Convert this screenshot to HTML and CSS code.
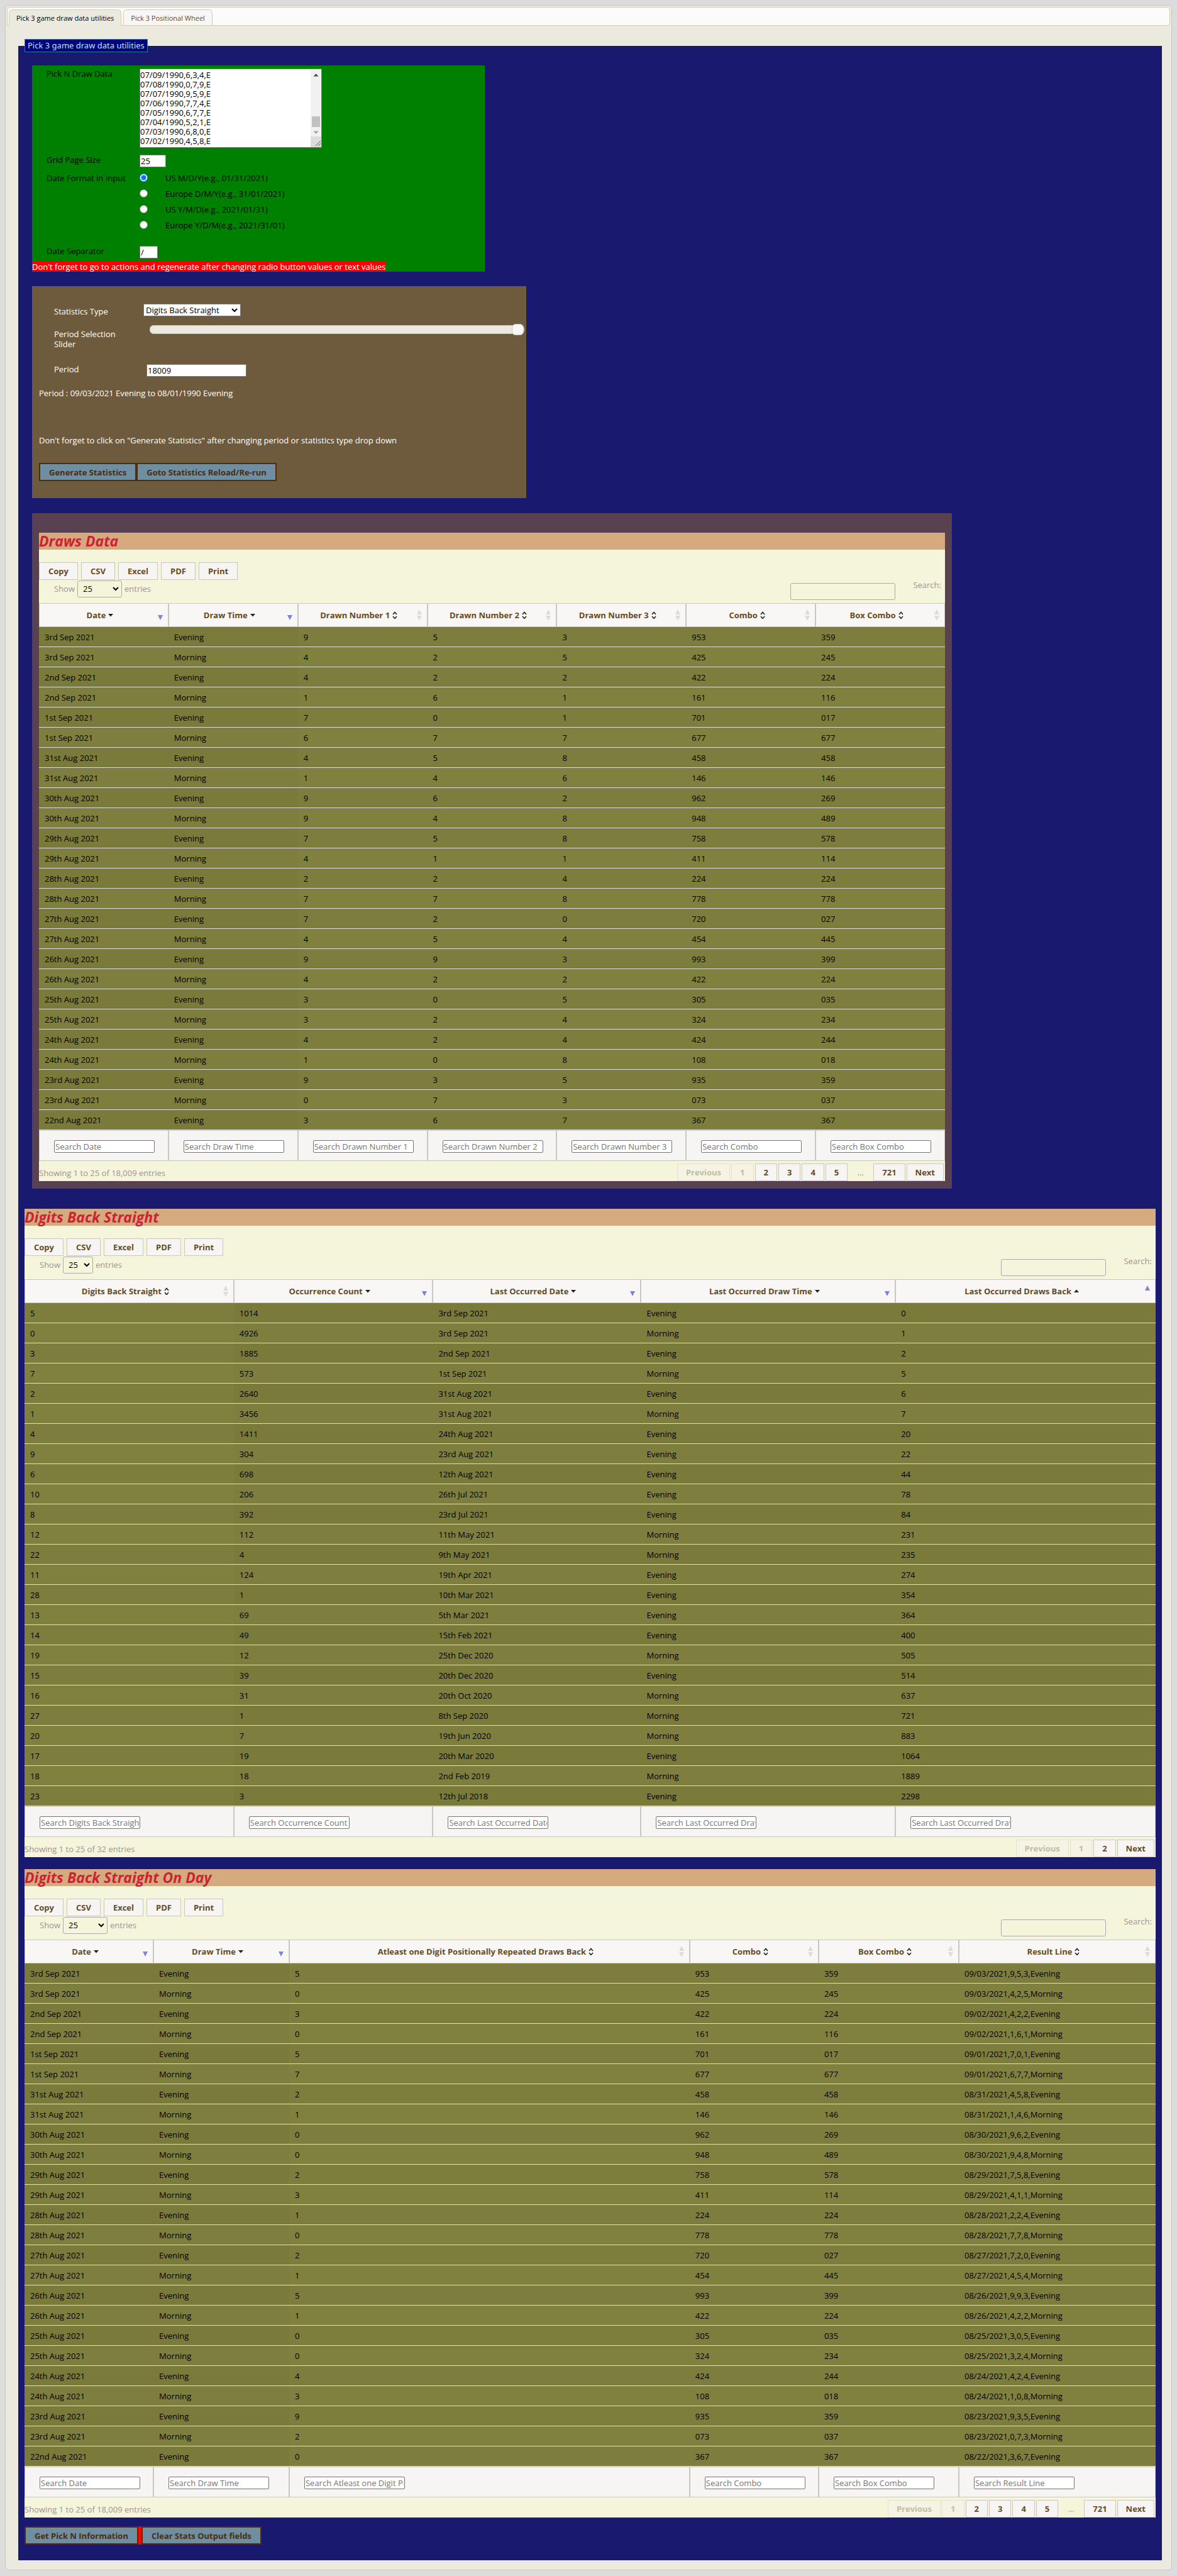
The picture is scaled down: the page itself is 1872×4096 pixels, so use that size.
FILE: index.html
```
<!DOCTYPE html>
<html lang="en">
<head>
<meta charset="utf-8">
<title>Pick 3 game draw data utilities</title>
<link rel="stylesheet" href="styles.css">
</head>
<body>
<svg class="symbols" aria-hidden="true">
  <symbol id="caret-down" viewBox="0 0 8 12"><path d="M0 4h8L4 8.500z"/></symbol>
  <symbol id="caret-up" viewBox="0 0 8 12"><path d="M0 8h8L4 3.500z"/></symbol>
  <symbol id="caret-both" viewBox="0 0 8 12"><path d="M1 5l3-3.500L7 5M1 8l3 3.500L7 8" fill="none" stroke="#222" stroke-width="1.600"/></symbol>
  <symbol id="sort-both" viewBox="0 0 8 20"><path d="M0 9L4 1l4 8zM0 11h8l-4 8z" fill="#dcdcdc"/></symbol>
  <symbol id="sort-down" viewBox="0 0 8 20"><path d="M0 10h8l-4 8z" fill="#7b83df"/></symbol>
  <symbol id="sort-up" viewBox="0 0 8 20"><path d="M0 9L4 1l4 8z" fill="#7b83df"/></symbol>
</svg>
<div class="tabs">
  <nav class="tab-bar">
    <a class="tab tab-active" href="#utilities">Pick 3 game draw data utilities</a>
    <a class="tab" href="#wheel">Pick 3 Positional Wheel</a>
  </nav>
  <main class="panel" id="utilities">
    <fieldset class="utilities">
      <legend>Pick 3 game draw data utilities</legend>

      <section class="input-box">
        <div class="row row-data">
          <label class="name" for="draws">Pick N Draw Data</label>
          <div class="data-wrap">
            <textarea id="draws" class="data">07/09/1990,6,3,4,E
07/08/1990,0,7,9,E
07/07/1990,9,5,9,E
07/06/1990,7,7,4,E
07/05/1990,6,7,7,E
07/04/1990,5,2,1,E
07/03/1990,6,8,0,E
07/02/1990,4,5,8,E</textarea>
            <svg class="scrollbar" viewBox="0 0 17 124" aria-hidden="true">
              <path d="M0 0h17v124H0z" fill="#f1f1f1"/>
              <path d="M4.500 11.500h8L8.500 7z" fill="#505050"/>
              <path d="M2 75h13v17H2z" fill="#c1c1c1"/>
              <path d="M4.500 98.500h8L8.500 103z" fill="#a3a3a3"/>
              <path d="M0 107h17v17H0z" fill="#dcdcdc"/>
              <path d="M8 122l8-8M12 122l4-4" stroke="#555" fill="none"/>
            </svg>
          </div>
        </div>
        <div class="row row-size">
          <label class="name" for="size">Grid Page Size</label>
          <input class="text text-size" id="size" type="text" value="25">
        </div>
        <div class="row row-format">
          <span class="name">Date Format in Input</span>
          <div class="options">
            <label class="option"><input type="radio" name="format" checked><span>US M/D/Y(e.g., 01/31/2021)</span></label>
            <label class="option"><input type="radio" name="format"><span>Europe D/M/Y(e.g., 31/01/2021)</span></label>
            <label class="option"><input type="radio" name="format"><span>US Y/M/D(e.g., 2021/01/31)</span></label>
            <label class="option"><input type="radio" name="format"><span>Europe Y/D/M(e.g., 2021/31/01)</span></label>
          </div>
        </div>
        <div class="row row-separator">
          <label class="name" for="separator">Date Separator</label>
          <input class="text text-separator" id="separator" type="text" value="/">
        </div>
        <p class="warning">Don't forget to go to actions and regenerate after changing radio button values or text values</p>
      </section>

      <section class="stats-box">
        <div class="stat stat-type">
          <label for="type">Statistics Type</label>
          <select id="type" class="type-select"><option>Digits Back Straight</option></select>
        </div>
        <div class="stat stat-slider">
          <label for="slider">Period Selection Slider</label>
          <input id="slider" type="range" min="0" max="18009" value="18009">
        </div>
        <div class="stat stat-period">
          <label for="period">Period</label>
          <input class="text text-period" id="period" type="text" value="18009">
        </div>
        <p class="period-range">Period : 09/03/2021 Evening to 08/01/1990 Evening</p>
        <p class="period-note">Don't forget to click on "Generate Statistics" after changing period or statistics type drop down</p>
        <div class="actions">
          <button class="action">Generate Statistics</button><button class="action">Goto Statistics Reload/Re-run</button>
        </div>
      </section>

      <section class="draws-box"><div class="grid" id="draws-grid"></div></section>
      <section class="grid" id="digits-grid"></section>
      <section class="grid" id="day-grid"></section>

      <div class="actions actions-end">
        <button class="action">Get Pick N Information</button><span class="divider"></span><button class="action">Clear Stats Output fields</button>
      </div>
    </fieldset>
  </main>
</div>
<script src="script.js"></script>
</body>
</html>
```
FILE: styles.css
```
* { box-sizing: border-box; }
body {
  margin: 0;
  padding: 8px;
  background: #dcdcdc;
  font: 13px/16px "Open Sans", "Trebuchet MS", sans-serif;
  color: #000;
}
p { margin: 0; }
input, select, textarea, button { font: inherit; color: inherit; margin: 0; }
.symbols { display: none; }

/* Tabs */
.tabs {
  border: 1px solid #cbc7bd;
  border-radius: 6px;
  background: #ece9df;
  padding: 2px;
}
.tab-bar {
  display: flex;
  align-items: flex-end;
  gap: 3px;
  height: 30px;
  padding: 0 2px;
  border: 1px solid #d4ccb0;
  border-radius: 6px;
  border-bottom-left-radius: 0;
  background: #fbfbfa;
}
.tab {
  height: 25px;
  padding: 0 11px;
  border: 1px solid #d4ccb0;
  border-bottom: 0;
  border-radius: 6px 6px 0 0;
  background: #f8f7f6;
  color: #654b24;
  font-size: 11px;
  line-height: 26px;
  text-decoration: none;
}
.tab-active { height: 26px; margin-bottom: -1px; background: #ece9df; color: #000; }
.panel { padding: 21px 13px 13px 18px; }

.utilities {
  min-width: 0;
  margin: 0;
  padding: 0 10px 25px;
  border: 0;
  background: #191970;
}
.utilities legend {
  height: 21px;
  padding: 0 4px;
  border: 1px solid #1f7a9c;
  background: #000080;
  color: #b9e4f5;
  font: 13px/19px "Noto Sans", Verdana, sans-serif;
}

/* Input form */
.input-box {
  width: 40%;
  margin: 21px 0 0 12px;
  padding-top: 5px;
  background: #008000;
}
.row { display: flex; padding-left: 23px; }
.name { width: 148px; flex: none; }
.data-wrap { position: relative; width: 290px; height: 126px; }
.data {
  display: block;
  width: 100%;
  height: 126px;
  padding: 2px 18px 2px 0;
  border: 1px solid #767676;
  background: #fff;
  line-height: 15px;
  overflow: hidden;
  resize: none;
}
.scrollbar { position: absolute; top: 1px; right: 1px; width: 17px; height: 124px; }
.text {
  height: 20px;
  padding: 0 1px;
  border: 1px solid #767676;
  background: #fff;
}
.text-size { width: 42px; }
.text-separator { width: 29px; }
.text-period { width: 159px; }
.row-data { margin-bottom: 11px; }
.row-size { margin-bottom: 4px; }
.row-format .name { padding-top: 5px; }
.option { display: flex; align-items: center; height: 25px; }
.option input { width: 13px; height: 13px; margin-right: 28px; }
.row-separator { margin: 21px 0 5px; }
.warning { width: max-content; background: #f00; color: #fff; }

/* Statistics form */
.stats-box {
  width: 44%;
  max-width: 786px;
  margin: 23px 0 0 12px;
  padding: 28px 3px 27px 11px;
  background: #6e5b3d;
  color: #fff;
}
.stat { display: flex; padding-left: 24px; }
.stat label { width: 142px; padding-right: 20px; flex: none; }
.stat-type label { padding-top: 4px; }
.type-select { width: 155px; height: 20px; padding: 0 3px; color: #000; border: 1px solid #767676; }
.stat-slider { height: 64px; margin-top: 12px; }
.stat-slider label { width: 152px; padding: 8px 32px 0 0; }
.stat-period label { width: 147px; }
.text-period { color: #000; }
.period-range { margin-top: 18px; }
.period-note { margin: 59px 0 28px; }
input[type="range"] {
  appearance: none;
  -webkit-appearance: none;
  flex: 1;
  min-width: 0;
  height: 18px;
  background: none;
}
input[type="range"]::-webkit-slider-runnable-track {
  height: 14px;
  border: 1px solid #cbc7bd;
  border-radius: 6px;
  background: #ece9df;
}
input[type="range"]::-webkit-slider-thumb {
  -webkit-appearance: none;
  width: 19px;
  height: 18px;
  margin-top: -3px;
  border: 1px solid #cbc7bd;
  border-radius: 6px;
  background: #f8f7f6;
}
select {
  appearance: none;
  -webkit-appearance: none;
  background: #fff url("data:image/svg+xml,%3Csvg xmlns='http://www.w3.org/2000/svg' width='10' height='8'%3E%3Cpath d='M1 2l4 4 4-4' fill='none' stroke='%23000' stroke-width='2'/%3E%3C/svg%3E") no-repeat right 4px center;
}

.actions { display: flex; }
.action {
  height: 29px;
  padding: 0 14px;
  border: 2px solid #532c00;
  background: #6e8ea2;
  color: #4d2b0c;
  font-weight: 700;
}
.divider { width: 5px; background: #f00; }
.actions-end { margin-top: 14px; }

/* Data grids */
.draws-box {
  width: 81%;
  min-width: 1463px;
  margin: 24px 0 32px 12px;
  padding: 31px 11px 12px;
  background: #5a4152;
}
.grid { background: #f5f5dc; }
.grid + .grid { margin-top: 19px; }
.grid-title {
  margin: 0 0 20px;
  background: #d6aa7f;
  color: #cc2233;
  font-size: 23px;
  font-style: italic;
  font-weight: 700;
  line-height: 27px;
}
.exports { display: flex; gap: 5px; }
.export, .page {
  height: 28px;
  padding: 0 13px;
  border: 1px solid #cbc7bd;
  background: #f6f5f4;
  color: #654b24;
  font-weight: 700;
}
.export { padding: 0 14px; }
.controls {
  display: flex;
  justify-content: space-between;
  height: 37px;
  padding: 0 6px 0 24px;
  color: #a39291;
}
.length { display: flex; align-items: center; gap: 4px; height: 28px; }
.length select {
  width: 71px;
  height: 27px;
  padding: 0 8px;
  border: 1px solid #aaa;
  border-radius: 3px;
  background-color: transparent;
  color: #000;
}
.length-narrow select { width: 48px; }
.filter { display: flex; gap: 28px; }
.filter input {
  width: 167px;
  height: 27px;
  margin-top: 5px;
  border: 1px solid #aaa;
  border-radius: 3px;
  background: transparent;
}
.data-table { width: 100%; table-layout: fixed; border-collapse: separate; border-spacing: 0; }
.data-table th, .data-table td { text-align: left; }
.data-table thead th {
  height: 38px;
  padding: 0 8px 0 4px;
  border: 1px solid #cbc7bd;
  background: #f8f7f6;
  color: #654b24;
  font-weight: 700;
}
.heading { display: flex; align-items: center; }
.heading-text { flex: 1; text-align: center; white-space: nowrap; }
.caret { width: 8px; height: 12px; margin-left: 4px; vertical-align: -1px; fill: #222; }
.sort { width: 8px; height: 20px; flex: none; }
.data-table tbody td {
  height: 32px;
  padding: 0 9px;
  border-bottom: 1px solid #ddd;
  background: #80803f;
  white-space: nowrap;
}
.data-table tbody tr:nth-child(odd) td { background: #7d7d3e; }
.data-table tbody td.sorted { background: #7e7e3e; }
.data-table tbody tr:nth-child(odd) td.sorted { background: #7a7a3b; }
.data-table tfoot td {
  height: 49px;
  padding: 2px 10px 0 23px;
  border: 1px solid #cbc7bd;
  background: #f6f5f4;
}
.data-table tfoot input {
  display: block;
  width: 160px;
  height: 20px;
  padding: 0 1px;
  border: 1px solid #767676;
  border-radius: 2px;
  background: #fff;
}
.data-table tfoot input::placeholder { color: #757575; }
.footer { display: flex; justify-content: space-between; align-items: flex-end; height: 32px; color: #a39291; }
.info { line-height: 26px; }
.pages { display: flex; gap: 2px; padding-right: 2px; }
.page:disabled { border-color: #e5e1cb; background: #f5f3e3; color: #c3bb9f; }
.ellipsis { width: 37px; line-height: 28px; text-align: center; }
```
FILE: script.js
```
const ordinal = n => n + (n % 10 === 1 && n !== 11 ? "st" : n % 10 === 2 && n !== 12 ? "nd" : n % 10 === 3 && n !== 13 ? "rd" : "th");

// Newest first, two draws a day (evening, then morning), starting on 3 September 2021.
const draws = "953 425 422 161 701 677 458 146 962 948 758 411 224 778 720 454 993 422 305 324 424 108 935 073 367".split(" ");
const repeats = "5 0 3 0 5 7 2 1 0 0 2 3 1 0 2 1 5 1 0 0 4 3 9 2 0".split(" ");

const records = draws.map((combo, i) => {
  const day = new Date(2021, 8, 3 - Math.floor(i / 2));
  const month = day.getMonth() + 1;
  const pad = n => String(n).padStart(2, "0");
  const time = i % 2 ? "Morning" : "Evening";
  return {
    date: `${ordinal(day.getDate())} ${month === 9 ? "Sep" : "Aug"} 2021`,
    time,
    digits: combo.split(""),
    combo,
    box: combo.split("").sort().join(""),
    line: `${pad(month)}/${pad(day.getDate())}/2021,${combo.split("").join(",")},${time}`
  };
});

const digitRows = `5|1014|3rd Sep 2021|Evening|0
0|4926|3rd Sep 2021|Morning|1
3|1885|2nd Sep 2021|Evening|2
7|573|1st Sep 2021|Morning|5
2|2640|31st Aug 2021|Evening|6
1|3456|31st Aug 2021|Morning|7
4|1411|24th Aug 2021|Evening|20
9|304|23rd Aug 2021|Evening|22
6|698|12th Aug 2021|Evening|44
10|206|26th Jul 2021|Evening|78
8|392|23rd Jul 2021|Evening|84
12|112|11th May 2021|Morning|231
22|4|9th May 2021|Morning|235
11|124|19th Apr 2021|Evening|274
28|1|10th Mar 2021|Evening|354
13|69|5th Mar 2021|Evening|364
14|49|15th Feb 2021|Evening|400
19|12|25th Dec 2020|Morning|505
15|39|20th Dec 2020|Evening|514
16|31|20th Oct 2020|Morning|637
27|1|8th Sep 2020|Morning|721
20|7|19th Jun 2020|Morning|883
17|19|20th Mar 2020|Evening|1064
18|18|2nd Feb 2019|Morning|1889
23|3|12th Jul 2018|Evening|2298`.split("\n").map(line => line.split("|"));

const icon = (name, cls) => `<svg class="${cls}" aria-hidden="true"><use href="#${name}"/></svg>`;

// Each column is [heading, sort state, width in percent].
function renderGrid(id, { title, columns, rows, info, pages, narrow }) {
  const page = p => p === "…"
    ? `<span class="ellipsis">…</span>`
    : `<button class="page"${p === "Previous" || p === "1" ? " disabled" : ""}>${p}</button>`;
  document.getElementById(id).innerHTML = `
    <h2 class="grid-title">${title}</h2>
    <div class="exports">${["Copy", "CSV", "Excel", "PDF", "Print"].map(t => `<button class="export">${t}</button>`).join("")}</div>
    <div class="controls">
      <label class="length${narrow ? " length-narrow" : ""}">Show <select><option>25</option></select> entries</label>
      <label class="filter"><input type="search"><span>Search:</span></label>
    </div>
    <table class="data-table">
      <colgroup>${columns.map(c => `<col style="width:${c[2]}%">`).join("")}</colgroup>
      <thead><tr>${columns.map(c => `<th scope="col"><div class="heading"><span class="heading-text">${c[0]}${icon("caret-" + c[1], "caret")}</span>${icon("sort-" + c[1], "sort")}</div></th>`).join("")}</tr></thead>
      <tbody>${rows.map(r => `<tr>${r.map((v, i) => `<td${columns[i][1] === "both" ? "" : ' class="sorted"'}>${v}</td>`).join("")}</tr>`).join("")}</tbody>
      <tfoot><tr>${columns.map(c => `<td><input type="text" aria-label="Search ${c[0]}" placeholder="Search ${c[0]}"></td>`).join("")}</tr></tfoot>
    </table>
    <div class="footer"><span class="info">${info}</span><div class="pages">${pages.map(page).join("")}</div></div>`;
}

const longPages = ["Previous", "1", "2", "3", "4", "5", "…", "721", "Next"];

renderGrid("draws-grid", {
  title: "Draws Data",
  columns: [["Date", "down"], ["Draw Time", "down"], ["Drawn Number 1", "both"], ["Drawn Number 2", "both"], ["Drawn Number 3", "both"], ["Combo", "both"], ["Box Combo", "both"]].map(c => [...c, 14.28]),
  rows: records.map(r => [r.date, r.time, ...r.digits, r.combo, r.box]),
  info: "Showing 1 to 25 of 18,009 entries",
  pages: longPages
});

renderGrid("digits-grid", {
  title: "Digits Back Straight",
  columns: [["Digits Back Straight", "both", 18.5], ["Occurrence Count", "down", 17.6], ["Last Occurred Date", "down", 18.4], ["Last Occurred Draw Time", "down", 22.5], ["Last Occurred Draws Back", "up", 23]],
  rows: digitRows,
  info: "Showing 1 to 25 of 32 entries",
  pages: ["Previous", "1", "2", "Next"],
  narrow: true
});

renderGrid("day-grid", {
  title: "Digits Back Straight On Day",
  columns: [["Date", "down", 11.4], ["Draw Time", "down", 12], ["Atleast one Digit Positionally Repeated Draws Back", "both", 35.4], ["Combo", "both", 11.4], ["Box Combo", "both", 12.4], ["Result Line", "both", 17.4]],
  rows: records.map((r, i) => [r.date, r.time, repeats[i], r.combo, r.box, r.line]),
  info: "Showing 1 to 25 of 18,009 entries",
  pages: longPages
});
```
